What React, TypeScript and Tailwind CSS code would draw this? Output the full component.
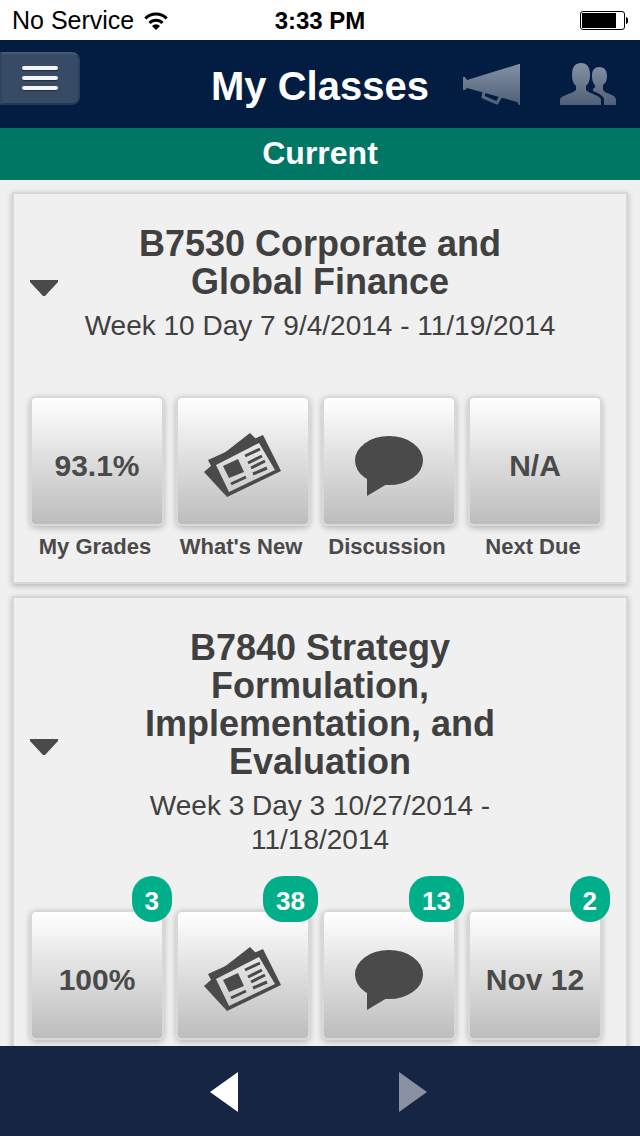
import type { ReactNode } from "react";

type Tile = {
  label: string;
  content: ReactNode;
  badge?: number;
};

type Course = {
  title: string;
  schedule: string;
  tiles: Tile[];
};

function WifiIcon() {
  return (
    <svg width="24" height="18" viewBox="0 0 24 18" aria-hidden="true">
      <g fill="none" stroke="#000" strokeWidth="3">
        <path d="M1.3 6.5a15 15 0 0 1 21.4 0" />
        <path d="M5.5 11a9 9 0 0 1 13 0" />
      </g>
      <path d="M8 14a5.6 5.6 0 0 1 8 0l-4 4z" />
    </svg>
  );
}

function BatteryIcon() {
  return (
    <svg width="48" height="19" viewBox="0 0 48 19" aria-label="Battery" role="img">
      <rect x="0.5" y="0.5" width="44" height="18" rx="2.5" fill="none" stroke="#000" />
      <rect x="2" y="2" width="34" height="15" />
      <path d="M46 6c3 1 3 6 0 7z" />
    </svg>
  );
}

function MegaphoneIcon() {
  return (
    <svg width="58" height="42" viewBox="0 0 58 42" aria-hidden="true">
      <defs>
        <linearGradient id="megaphone" x1="0" y1="0" x2="0" y2="42" gradientUnits="userSpaceOnUse">
          <stop offset="0" stopColor="#8592a5" />
          <stop offset="1" stopColor="#4f5f77" />
        </linearGradient>
      </defs>
      <path d="M1 14h2l2 3L57 1h1v41h-1l-2-3L5 25l-2 2H1z" fill="url(#megaphone)" />
      <path d="M22 29l-1 5 14 6 4-7" fill="none" stroke="url(#megaphone)" strokeWidth="3" strokeLinejoin="round" />
    </svg>
  );
}

function PeopleIcon() {
  return (
    <svg width="56" height="42" viewBox="0 0 56 42" aria-hidden="true">
      <defs>
        <linearGradient id="people" x1="0" y1="0" x2="0" y2="42" gradientUnits="userSpaceOnUse">
          <stop offset="0" stopColor="#8592a5" />
          <stop offset="1" stopColor="#4f5f77" />
        </linearGradient>
      </defs>
      <g fill="url(#people)">
        <path d="M0 42v-5c0-5 13-6 16-10v-4c-3-3-4-6-4-11C12 4 15 0 21 0s9 4 9 12c0 5-1 8-4 11v4c3 4 15 5 15 10v5z" />
        <path d="M44 42v-5c0-4-4-6-11-9v-2c2-1 3-3 1-5-2-3-2-6-2-9 0-5 3-8 7-8 6 0 8 4 8 9 0 4-1 7-4 9v5c2 4 13 4 13 10v5z" />
      </g>
    </svg>
  );
}

function NewsIcon() {
  return (
    <svg width="78" height="65" viewBox="0 0 78 65" aria-hidden="true">
      <g fill="#4a4a4a">
        <path d="M59 2l18 36-54 26L4 27zM55 10L12 32l13 27 46-22z" fillRule="evenodd" />
        <path d="M0 39l8-7 15 32z" />
        <path d="M19 21L46 0l6 6z" />
        <path d="M19 33l15-7 6 13-15 6z" />
      </g>
      <path
        d="M41 23l15-7M44 30l14-7M47 35l14-7M49 41l14-6M27 51l15-7"
        fill="none"
        stroke="#4a4a4a"
        strokeWidth="3"
      />
    </svg>
  );
}

function BubbleIcon() {
  return (
    <svg width="68" height="60" viewBox="0 0 68 60" fill="#4a4a4a" aria-hidden="true">
      <ellipse cx="34" cy="24.5" rx="34" ry="24.5" />
      <path d="M12 40v20l20-12z" />
    </svg>
  );
}

const courses: Course[] = [
  {
    title: "B7530 Corporate and Global Finance",
    schedule: "Week 10 Day 7 9/4/2014 - 11/19/2014",
    tiles: [
      { label: "My Grades", content: "93.1%" },
      { label: "What's New", content: <NewsIcon /> },
      { label: "Discussion", content: <BubbleIcon /> },
      { label: "Next Due", content: "N/A" },
    ],
  },
  {
    title: "B7840 Strategy Formulation, Implementation, and Evaluation",
    schedule: "Week 3 Day 3 10/27/2014 - 11/18/2014",
    tiles: [
      { label: "My Grades", content: "100%", badge: 3 },
      { label: "What's New", content: <NewsIcon />, badge: 38 },
      { label: "Discussion", content: <BubbleIcon />, badge: 13 },
      { label: "Next Due", content: "Nov 12", badge: 2 },
    ],
  },
];

function TileButton({ label, content, badge }: Tile) {
  return (
    <button type="button" className="relative block w-full text-[#4a4a4a]">
      <span className="flex h-[130px] items-center justify-center rounded-md border-2 border-[#d9d9d4] bg-linear-to-b from-white to-[#bdbdbd] pt-[9px] text-[30px] font-bold whitespace-nowrap shadow-[0_2px_6px_rgba(0,0,0,0.25)]">
        {content}
      </span>
      <span className="mt-[9px] block pr-1 text-[22px] leading-6 font-bold whitespace-nowrap">{label}</span>
      {badge !== undefined && (
        <span className="absolute -top-[34px] -right-2 flex h-[46px] items-center rounded-[20px] bg-[#00ae8a] px-[13px] pt-1 text-[26px] font-bold text-white">
          {badge}
        </span>
      )}
    </button>
  );
}

function CourseCard({ title, schedule, tiles }: Course) {
  return (
    <section className="border-2 border-[#d9d9d4] bg-[#f0f0f0] pt-[31px] pr-6 pb-[23px] pl-4 shadow-[0_2px_6px_rgba(0,0,0,0.25)]">
      <div className="flex items-center">
        <button type="button" aria-label="Collapse course" className="w-[50px] shrink-0 pt-2">
          <svg width="28" height="16" viewBox="0 0 28 16" fill="#4a4a4a" aria-hidden="true">
            <path d="M0 0h28v2L15 16h-2L0 2z" />
          </svg>
        </button>
        <div className="flex-1 text-center text-[#404040]">
          <h2 className="text-[36px] leading-[38px] font-bold">{title}</h2>
          <p className="mt-2 text-[28px] leading-[34px]">{schedule}</p>
        </div>
        <div className="w-[42px] shrink-0" />
      </div>
      <div className="mt-[53px] grid grid-cols-4 gap-3">
        {tiles.map((tile) => (
          <TileButton key={tile.label} {...tile} />
        ))}
      </div>
    </section>
  );
}

export default function App() {
  return (
    <div className="flex h-screen flex-col bg-[#f0f0f0] font-['Liberation_Sans',Arial,sans-serif]">
      {/* Status bar */}
      <div className="grid h-10 shrink-0 grid-cols-[1fr_auto_1fr] items-center bg-white px-3 pt-px text-black">
        <div className="flex items-center gap-[10px] text-[25px]">
          No Service
          <WifiIcon />
        </div>
        <span className="text-[24px] font-bold">3:33 PM</span>
        <div className="flex justify-end">
          <BatteryIcon />
        </div>
      </div>

      {/* Header */}
      <header className="grid h-[88px] shrink-0 grid-cols-[1fr_auto_1fr] items-center bg-[#021d41]">
        <button
          type="button"
          aria-label="Menu"
          className="mt-3 flex h-[53px] w-20 flex-col items-center gap-[6px] self-start rounded-r-lg border-2 border-t-[#465772] border-r-[#2b3f5c] border-b-[#263853] border-l-[#304461] bg-[#374a66] pt-3"
        >
          <span className="h-1 w-9 rounded-sm bg-[#f5f5f7] shadow-[0_1px_1px_rgba(0,0,0,0.4)]" />
          <span className="h-1 w-9 rounded-sm bg-[#f5f5f7] shadow-[0_1px_1px_rgba(0,0,0,0.4)]" />
          <span className="h-1 w-9 rounded-sm bg-[#f5f5f7] shadow-[0_1px_1px_rgba(0,0,0,0.4)]" />
        </button>
        <h1 className="pt-1 text-[40px] font-bold text-white">My Classes</h1>
        <div className="flex items-center justify-end gap-10 pr-6">
          <button type="button" aria-label="Announcements">
            <MegaphoneIcon />
          </button>
          <button type="button" aria-label="People">
            <PeopleIcon />
          </button>
        </div>
      </header>

      <div className="flex h-[52px] shrink-0 items-center justify-center bg-[#007764] pb-[2px] text-[32px] font-bold text-white">
        Current
      </div>

      <main className="flex min-h-0 flex-1 flex-col gap-3 overflow-y-auto p-3 [scrollbar-width:none] *:shrink-0">
        {courses.map((course) => (
          <CourseCard key={course.title} {...course} />
        ))}
      </main>

      {/* Bottom navigation */}
      <nav className="flex h-[90px] shrink-0 items-center justify-center gap-[161px] bg-[#152543] pt-[2px] pr-1">
        <button type="button" aria-label="Back">
          <svg width="28" height="40" viewBox="0 0 28 40" fill="#fff" aria-hidden="true">
            <path d="M28 0v40L0 20z" />
          </svg>
        </button>
        <button type="button" aria-label="Forward">
          <svg width="28" height="40" viewBox="0 0 28 40" fill="#8a92a1" aria-hidden="true">
            <path d="M0 0v40l28-20z" />
          </svg>
        </button>
      </nav>
    </div>
  );
}
